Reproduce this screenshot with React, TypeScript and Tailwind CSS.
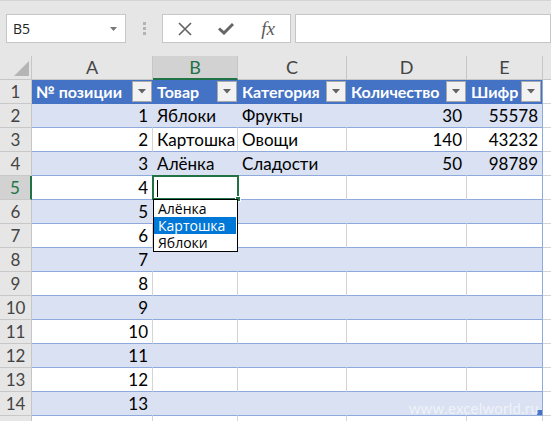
import React from 'react';

const COLS = [
  { key: 'A', w: 'w-[121px]' },
  { key: 'B', w: 'w-[85px]' },
  { key: 'C', w: 'w-[109px]' },
  { key: 'D', w: 'w-[120px]' },
  { key: 'E', w: 'w-[76px]' },
];

const headers = ['№ позиции', 'Товар', 'Категория', 'Количество', 'Шифр'];

const data: (string | number)[][] = [
  [1, 'Яблоки', 'Фрукты', 30, 55578],
  [2, 'Картошка', 'Овощи', 140, 43232],
  [3, 'Алёнка', 'Сладости', 50, 98789],
  ...Array.from({ length: 10 }, (_, i) => [i + 4, '', '', '', '']),
];

const FilterButton = () => (
  <div className="absolute right-[1px] top-[1px] w-[20px] h-[21px] bg-[#f2f2f2] border border-[#a9a9a9] flex items-center justify-center">
    <svg width="8" height="5" viewBox="0 0 8 5">
      <path d="M0 0 L8 0 L4 4.5 Z" fill="#636363" />
    </svg>
  </div>
);

const RowHeader: React.FC<{ n?: number; active?: boolean }> = ({ n, active }) => (
  <div
    className={`w-[32px] h-full shrink-0 flex items-center justify-center border-b border-[#c8c8c8] ${
      active ? 'bg-[#d2d2d2] text-[#217346] border-r-2 border-r-[#217346]' : 'bg-[#e6e6e6] text-[#444] border-r border-r-[#c6c6c6]'
    }`}
  >
    {n}
  </div>
);

export default function App() {
  return (
    <div className="relative w-[551px] h-[421px] overflow-hidden bg-white font-['Lato',sans-serif] text-[17px] text-black">
      {/* formula bar */}
      <div className="h-[56px] bg-[#e6e6e6] border-t border-[#d4d4d4] flex items-start pt-[13px] pl-[6px]">
        <div className="w-[120px] h-[29px] bg-white border border-[#c6c6c6] flex items-center justify-between pl-[6px] pr-[8px] font-['Open_Sans',sans-serif] text-[14px] text-[#222]">
          <span>B5</span>
          <svg width="7" height="4" viewBox="0 0 7 4">
            <path d="M0 0 L7 0 L3.5 4 Z" fill="#777" />
          </svg>
        </div>
        <div className="w-[36px] h-[29px] flex flex-col items-center justify-center gap-[2px]">
          <div className="w-[3px] h-[3px] bg-[#b3b3b3]" />
          <div className="w-[3px] h-[3px] bg-[#b3b3b3]" />
          <div className="w-[3px] h-[3px] bg-[#b3b3b3]" />
        </div>
        <div className="w-[129px] h-[29px] bg-white border border-[#c6c6c6] flex items-center">
          <div className="w-[42px] flex justify-center pl-[1px]">
            <svg width="14" height="14" viewBox="0 0 14 14">
              <path d="M1 1 L13 13 M13 1 L1 13" stroke="#666" strokeWidth="1.7" />
            </svg>
          </div>
          <div className="w-[42px] flex justify-center">
            <svg width="16" height="13" viewBox="0 0 16 13">
              <path d="M1 6.5 L6 11 L15 2" stroke="#666" strokeWidth="3" fill="none" />
            </svg>
          </div>
          <div className="w-[42px] flex justify-center font-['Liberation_Serif',serif] italic text-[19px] text-[#5a5a5a] leading-none">
            fx
          </div>
        </div>
        <div className="ml-[4px] flex-1 h-[29px] bg-white border border-[#c6c6c6]" />
      </div>

      {/* column headers */}
      <div className="h-[24px] flex text-[#444] text-[18px]">
        <div className="w-[32px] h-full shrink-0 bg-[#e6e6e6] border-r border-b border-[#c6c6c6] flex items-end justify-end pr-[2px] pb-[3px]">
          <svg width="15" height="15" viewBox="0 0 15 15">
            <path d="M15 0 L15 15 L0 15 Z" fill="#b5b5b5" />
          </svg>
        </div>
        {COLS.map((c) =>
          c.key === 'B' ? (
            <div key={c.key} className={`${c.w} h-full shrink-0 bg-[#d2d2d2] text-[#217346] border-r border-[#c6c6c6] border-b-2 border-b-[#217346] flex items-center justify-center`}>
              {c.key}
            </div>
          ) : (
            <div key={c.key} className={`${c.w} h-full shrink-0 bg-[#e6e6e6] border-r border-b border-[#c6c6c6] flex items-center justify-center`}>
              {c.key}
            </div>
          )
        )}
        <div className="flex-1 h-full bg-[#e6e6e6] border-b border-[#c6c6c6]" />
      </div>

      {/* row 1 — table header */}
      <div className="h-[24px] flex">
        <RowHeader n={1} />
        {COLS.map((c, i) => (
          <div key={c.key} className={`${c.w} relative h-full shrink-0 bg-[#4472c4] text-white text-[16px] font-bold flex items-center pl-[4px] ${i === 4 ? 'border-r border-[#8ea9db]' : ''}`}>
            {headers[i]}
            <FilterButton />
          </div>
        ))}
        <div className="flex-1 h-full border-b border-[#d4d4d4]" />
      </div>

      {/* data rows */}
      {data.map((row, r) => {
        const banded = r % 2 === 0;
        return (
          <div key={r} className="h-[24px] flex">
            <RowHeader n={r + 2} active={r + 2 === 5} />
            {COLS.map((c, i) => {
              const v = row[i];
              const right = typeof v === 'number';
              const edge = i === 4 ? 'border-r-[#8ea9db]' : banded ? 'border-r-transparent' : 'border-r-[#d4d4d4]';
              return (
                <div
                  key={c.key}
                  className={`${c.w} h-full shrink-0 flex items-center border-b border-b-[#8ea9db] border-r ${edge} ${
                    banded ? 'bg-[#d9e1f2]' : 'bg-white'
                  } ${right ? 'justify-end pr-[4px]' : 'pl-[4px]'}`}
                >
                  {v}
                </div>
              );
            })}
            <div className="flex-1 h-full border-b border-[#d4d4d4]" />
          </div>
        );
      })}

      {/* row 15 (partial) */}
      <div className="h-[24px] flex">
        <RowHeader />
        {COLS.map((c) => (
          <div key={c.key} className={`${c.w} h-full shrink-0 border-r border-[#d4d4d4]`} />
        ))}
      </div>

      {/* active cell B5 */}
      <div className="absolute left-[152px] top-[175px] w-[87px] h-[25px] border-2 border-[#217346]">
        <div className="absolute left-[3px] top-[3px] w-[1px] h-[17px] bg-black" />
        <div className="absolute right-[-4px] bottom-[-4px] w-[6px] h-[6px] bg-[#217346] border border-white" />
      </div>

      {/* validation list */}
      <div className="absolute left-[153px] top-[199px] w-[85px] h-[53px] bg-white border border-black font-['Open_Sans',sans-serif] text-[14px] leading-[17px]">
        <div className="h-[17px] pl-[4px]">Алёнка</div>
        <div className="h-[17px] pl-[4px] mr-[1px] bg-[#0078d7] text-white">Картошка</div>
        <div className="h-[17px] pl-[4px]">Яблоки</div>
      </div>

      {/* table resize handle */}
      <div className="absolute left-[537px] top-[410px] w-[5px] h-[5px] bg-[#4472c4]" />

      {/* watermark */}
      <div className="absolute right-[12px] top-[397px] text-[15px] text-white/60 font-['Lato',sans-serif] tracking-[0.2px]">
        www.excelworld.ru
      </div>
    </div>
  );
}
